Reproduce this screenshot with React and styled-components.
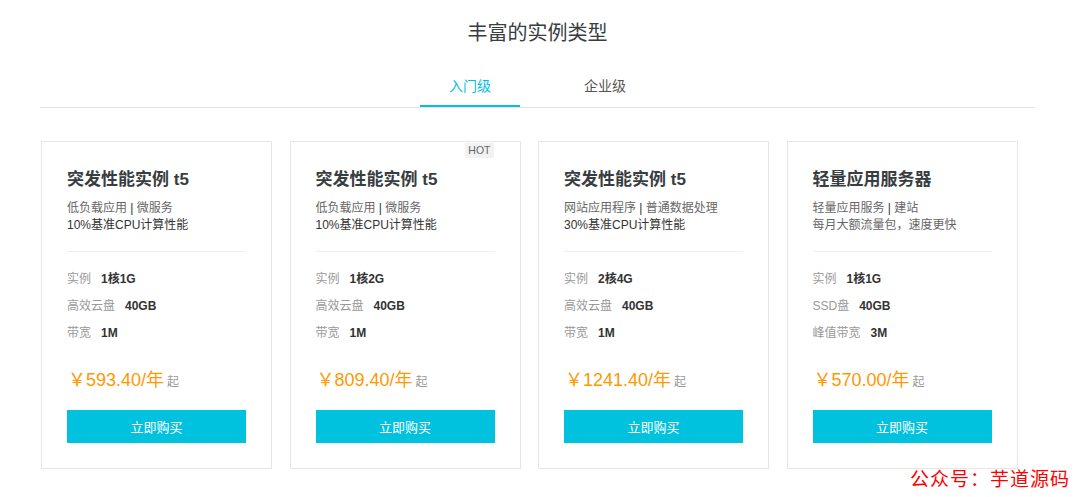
import React, { useState } from 'react'
import styled, { createGlobalStyle } from 'styled-components'

const GlobalStyle = createGlobalStyle`
  body {
    margin: 0;
    background: #fff;
    font-family: "Liberation Sans", "Noto Sans CJK SC", sans-serif;
  }
`

const Page = styled.div`
  position: relative;
  width: 1080px;
  height: 497px;
  overflow: hidden;
`

const Section = styled.div`
  width: 995px;
  margin-left: 40px;
  padding-top: 19px;
`

const Title = styled.h2`
  margin: 0;
  font-size: 20px;
  line-height: 28px;
  font-weight: normal;
  color: #373d41;
  text-align: center;
`

const TabBar = styled.div`
  display: flex;
  justify-content: center;
  gap: 35px;
  margin-top: 20px;
  border-bottom: 1px solid #e4e4e4;
`

const Tab = styled.div`
  width: 100px;
  height: 40px;
  box-sizing: border-box;
  line-height: 38px;
  text-align: center;
  font-size: 14px;
  cursor: pointer;
  color: ${p => (p.$active ? '#00c1de' : '#555')};
  border-bottom: 2px solid ${p => (p.$active ? '#00c1de' : 'transparent')};
`

const Cards = styled.div`
  display: flex;
  gap: 17.5px;
  margin-top: 33px;
  margin-left: 1px;
`

const Card = styled.div`
  position: relative;
  width: 231px;
  height: 328px;
  box-sizing: border-box;
  border: 1px solid #e6e6e6;
  padding: 26px 25px 0;
  display: flex;
  flex-direction: column;
`

const Hot = styled.span`
  position: absolute;
  top: 1px;
  right: 26px;
  padding: 0 3px;
  background: #f2f2f2;
  color: #666;
  font-size: 10.5px;
  line-height: 15px;
`

const CardTitle = styled.div`
  font-size: 17px;
  line-height: 24px;
  font-weight: bold;
  color: #373d41;
`

const Desc = styled.div`
  margin-top: 8px;
  font-size: 12px;
  line-height: 17px;
  color: #666;

  b {
    color: #333;
    font-weight: normal;
  }
`

const DescLine = styled.div`
  color: ${p => (p.$dark ? '#333' : '#666')};
`

const Divider = styled.div`
  height: 1px;
  background: #eeeeee;
  margin-top: 17px;
`

const Specs = styled.div`
  margin-top: 14px;
`

const Spec = styled.div`
  display: flex;
  gap: 10px;
  font-size: 12px;
  line-height: 27px;
`

const Label = styled.span`
  color: #999;
`

const Value = styled.span`
  color: #333;
  font-weight: bold;
`

const Price = styled.div`
  margin-top: 21px;
  font-size: 18px;
  line-height: 24px;
  color: #ff9900;
  padding-left: 1px;

  small {
    font-size: 12px;
    color: #999;
    margin-left: 3px;
  }
`

const BuyButton = styled.button`
  margin-top: 16px;
  height: 33px;
  width: 100%;
  border: none;
  background: #00c1de;
  color: #fff;
  font-family: inherit;
  font-size: 13px;
  cursor: pointer;
`

const Watermark = styled.div`
  position: absolute;
  right: 10px;
  bottom: 8px;
  color: #ff0000;
  font-size: 19px;
  line-height: 22px;
  font-family: "Noto Sans CJK SC", sans-serif;
  letter-spacing: 1px;
`

const products = [
  {
    name: '突发性能实例 t5',
    desc: ['低负载应用 ', '微服务'],
    extra: '10%基准CPU计算性能',
    darkExtra: true,
    specs: [['实例', '1核1G'], ['高效云盘', '40GB'], ['带宽', '1M']],
    price: '￥593.40/年',
  },
  {
    name: '突发性能实例 t5',
    desc: ['低负载应用 ', '微服务'],
    extra: '10%基准CPU计算性能',
    darkExtra: true,
    hot: true,
    specs: [['实例', '1核2G'], ['高效云盘', '40GB'], ['带宽', '1M']],
    price: '￥809.40/年',
  },
  {
    name: '突发性能实例 t5',
    desc: ['网站应用程序 ', '普通数据处理'],
    extra: '30%基准CPU计算性能',
    darkExtra: true,
    specs: [['实例', '2核4G'], ['高效云盘', '40GB'], ['带宽', '1M']],
    price: '￥1241.40/年',
  },
  {
    name: '轻量应用服务器',
    desc: ['轻量应用服务 ', '建站'],
    extra: '每月大额流量包，速度更快',
    specs: [['实例', '1核1G'], ['SSD盘', '40GB'], ['峰值带宽', '3M']],
    price: '￥570.00/年',
  },
]

const App = () => {
  const [tab, setTab] = useState(0)

  return (
    <Page>
      <GlobalStyle />
      <Section>
        <Title>丰富的实例类型</Title>
        <TabBar>
          {['入门级', '企业级'].map((t, i) => (
            <Tab key={t} $active={tab === i} onClick={() => setTab(i)}>{t}</Tab>
          ))}
        </TabBar>
        <Cards>
          {products.map((p, i) => (
            <Card key={i}>
              {p.hot && <Hot>HOT</Hot>}
              <CardTitle>{p.name}</CardTitle>
              <Desc>
                <div>{p.desc[0]}<b>|</b> {p.desc[1]}</div>
                <DescLine $dark={p.darkExtra}>{p.extra}</DescLine>
              </Desc>
              <Divider />
              <Specs>
                {p.specs.map(([k, v]) => (
                  <Spec key={k}>
                    <Label>{k}</Label>
                    <Value>{v}</Value>
                  </Spec>
                ))}
              </Specs>
              <Price>{p.price}<small>起</small></Price>
              <BuyButton>立即购买</BuyButton>
            </Card>
          ))}
        </Cards>
      </Section>
      <Watermark>公众号：芋道源码</Watermark>
    </Page>
  )
}

export default App
